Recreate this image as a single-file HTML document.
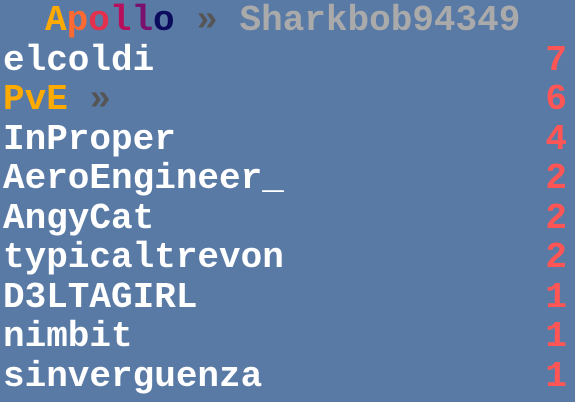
<!DOCTYPE html>
<html><head><meta charset="utf-8"><style>
html,body{margin:0;padding:0}
body{width:575px;height:402px;background:#5a7aa6;overflow:hidden;position:relative;font-family:"Liberation Mono",monospace;font-size:36px;font-weight:bold}
.r{position:absolute;left:3px;right:8px;height:39.5px;line-height:39.5px;color:#fff;white-space:pre}
.s{position:absolute;right:0;top:0;color:#ff5555}
.g{color:#555555}
</style></head><body>
<div class="r" style="top:1px;left:45px"><span style="color:#ffaa00">A</span><span style="color:#ff6a33">p</span><span style="color:#e3304d">o</span><span style="color:#b80f5c">l</span><span style="color:#7a116e">l</span><span style="color:#0c0c5e">o</span> <span class="g">»</span> <span style="color:#aaaaaa">Sharkbob94349</span></div>
<div class="r" style="top:40.5px">elcoldi<span class="s">7</span></div>
<div class="r" style="top:80px"><span style="color:#ffaa00">PvE</span> <span class="g">»</span><span class="s">6</span></div>
<div class="r" style="top:119.5px">InProper<span class="s">4</span></div>
<div class="r" style="top:159px">AeroEngineer_<span class="s">2</span></div>
<div class="r" style="top:198.5px">AngyCat<span class="s">2</span></div>
<div class="r" style="top:238px">typicaltrevon<span class="s">2</span></div>
<div class="r" style="top:277.5px">D3LTAGIRL<span class="s">1</span></div>
<div class="r" style="top:317px">nimbit<span class="s">1</span></div>
<div class="r" style="top:356.5px">sinverguenza<span class="s">1</span></div>
</body></html>
